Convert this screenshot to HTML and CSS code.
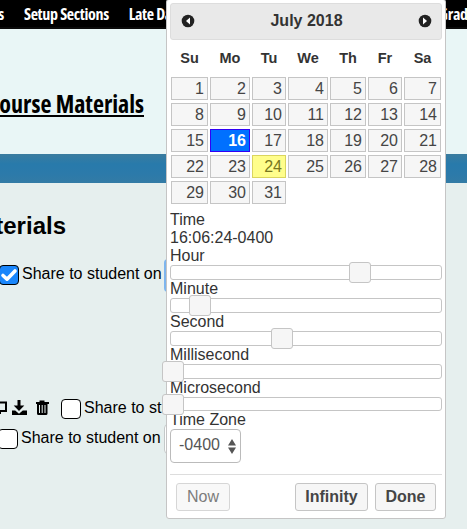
FILE: index.html
```html
<!DOCTYPE html>
<html lang="en">
<head>
<meta charset="utf-8">
<title>Course Materials</title>
<link rel="stylesheet" href="styles.css">
</head>
<body>
<nav class="nav">
  <span class="nav-first"><b class="cond">Materials</b></span>
  <span class="nav-setup"><b class="cond">Setup Sections</b></span>
  <span class="nav-late"><b class="cond">Late Days</b></span>
  <span class="nav-grade"><b class="cond">Grades</b></span>
</nav>
<header class="title"><h1 class="cond">Course Materials</h1></header>
<div class="band"></div>
<main>
  <h2>Materials</h2>
  <div class="row row-a"><i class="check on"><svg viewBox="0 0 18 18"><path d="M3 9.5l4 3.7L15 5" fill="none" stroke="#fff" stroke-width="3.6" stroke-linecap="round" stroke-linejoin="round"/></svg></i><span>Share to student on</span><i class="field focus"></i></div>
  <div class="row row-b">
    <svg class="tools" viewBox="0 0 50 20">
      <path d="M0 3.500H6V12H0M0 12v3" fill="none" stroke="#000" stroke-width="2"/>
      <path d="M17.500 1h3v5.500h3.800L19 12 13.700 6.500h3.800zM12 11.500h3.200l3.800 3.200 3.800-3.200H27V16H12z"/>
      <path d="M39.500 3V1.500h5V3H49v2H36V3zM37 5h10.500v9.500q0 1.500-1.500 1.500h-7.500q-1.500 0-1.500-1.500z"/>
      <path d="M39.500 6v8M42.200 6v8M45 6v8" stroke="#e6efee"/>
    </svg>
    <i class="check"></i><span>Share to student on</span>
  </div>
  <div class="row row-c"><i class="check"></i><span>Share to student on</span><i class="field"></i></div>
</main>

<section class="picker">
  <div class="month">
    <svg viewBox="0 0 14 14"><circle cx="7" cy="7" r="6.300"/><path d="M9 3.500v7L5 7z" fill="#fff"/></svg>
    <b>July 2018</b>
    <svg viewBox="0 0 14 14"><circle cx="7" cy="7" r="6.300"/><path d="M5 3.500v7L9 7z" fill="#fff"/></svg>
  </div>
  <div class="grid days"><b>Su</b><b>Mo</b><b>Tu</b><b>We</b><b>Th</b><b>Fr</b><b>Sa</b></div>
  <div class="grid dates">
    <a>1</a><a>2</a><a>3</a><a>4</a><a>5</a><a>6</a><a>7</a>
    <a>8</a><a>9</a><a>10</a><a>11</a><a>12</a><a>13</a><a>14</a>
    <a>15</a><a class="selected">16</a><a>17</a><a>18</a><a>19</a><a>20</a><a>21</a>
    <a>22</a><a>23</a><a class="today">24</a><a>25</a><a>26</a><a>27</a><a>28</a>
    <a>29</a><a>30</a><a>31</a>
  </div>
  <div class="time">
    <div>Time</div>
    <div>16:06:24-0400</div>
    <div>Hour</div><div class="slider"><i class="handle hour"></i></div>
    <div>Minute</div><div class="slider"><i class="handle minute"></i></div>
    <div>Second</div><div class="slider"><i class="handle second"></i></div>
    <div>Millisecond</div><div class="slider"><i class="handle zero"></i></div>
    <div>Microsecond</div><div class="slider last"><i class="handle zero"></i></div>
    <div>Time Zone</div>
    <div class="select"><span>-0400</span><svg viewBox="0 0 8 15"><path d="M0 6.500L4 0l4 6.500zM0 8.500h8L4 15z" fill="#555"/></svg></div>
  </div>
  <div class="buttons"><span class="btn now">Now</span><span class="btn infinity">Infinity</span><span class="btn done">Done</span></div>
</section>
</body>
</html>
```
FILE: styles.css
```css
* { box-sizing: border-box; }
body { margin: 0; width: 467px; height: 529px; overflow: hidden; position: relative; background: #e6efee; color: #000; font: 16px/18px "Liberation Sans", Arial, sans-serif; }
i { font-style: normal; }
.cond { font-family: "Open Sans", sans-serif; font-weight: 700; font-stretch: 75%; white-space: nowrap; display: inline-block; }
.nav { display: flex; height: 29px; background: #000; border-bottom: 2px solid #0b0b0b; color: #fff; font-size: 16px; line-height: 29px; letter-spacing: -0.35px; }
.nav-first { width: 4px; display: flex; justify-content: flex-end; }
.nav-setup { width: 85px; margin-left: 20px; }
.nav-late { width: 50px; margin-left: 20px; }
.nav-grade { margin-left: 260px; }
.title { height: 125px; padding-top: 57px; background: #e9f6f6; width: 467px; padding-right: 323px; display: flex; justify-content: flex-end; }
.title h1 { margin: 0; height: 31px; font-size: 24px; line-height: 36px; border-bottom: 2px solid #000; }
.band { height: 29px; background: linear-gradient(#3a7c9f, #287aab 35%, #2c7aaa 70%, #337ba5); }
h2 { margin: 28px 0 0; width: 66px; height: 30px; font-size: 24px; line-height: 30px; display: flex; justify-content: flex-end; }
.row { display: flex; align-items: center; height: 20px; white-space: nowrap; }
.row span { line-height: 18px; margin-left: 3px; padding-bottom: 2px; }
.row-a { margin-top: 24px; margin-left: -1px; }
.row-b { margin-top: 114px; }
.row-c { margin-top: 10px; margin-left: -2px; }
.check { flex: none; width: 20px; height: 20px; border: 1px solid #000; border-radius: 4px; background: #fff; }
.check.on { background: #1a86fb; }
.check svg { display: block; width: 18px; height: 18px; }
.tools { width: 50px; height: 20px; margin-right: 11px; flex: none; }
.field { width: 60px; height: 30px; border: 1px solid #c4c9c9; border-radius: 4px; margin-left: 3px; background: #fff; flex: none; }
.field.focus { height: 33px; border: 3px solid #7db5ee; margin-left: 2px; }
.picker { position: absolute; left: 166px; top: -1px; width: 280px; height: 520px; padding: 3px; border: 1px solid #c5c5c5; border-radius: 3px; background: #fff; color: #333; }
.month { display: flex; align-items: center; justify-content: space-between; height: 37px; padding: 0 9px 2px 10px; border: 1px solid #ddd; border-radius: 3px; background: #e9e9e9; }
.month svg { width: 14px; height: 14px; fill: #222; margin-top: 1px; }
.grid { display: grid; grid-template-columns: 37px 40px 34px 40px 36px 34px 37px; column-gap: 2px; margin-left: 1px; }
.days { height: 37px; line-height: 37px; text-align: center; font-size: 14.500px; }
.dates { grid-auto-rows: 23px; row-gap: 3px; font-size: 16px; }
.dates a { border: 1px solid #c5c5c5; background: #f6f6f6; color: #454545; text-align: right; padding-right: 3px; line-height: 21px; }
.dates .selected { background: #0070ff; border-color: #3000f5; color: #fff; font-weight: 700; }
.dates .today { background: #fffe8b; border-color: #dad55e; color: #777620; }
.time { margin-top: 7px; }
.slider { position: relative; height: 15px; border: 1px solid #c5c5c5; border-radius: 3px; }
.slider.last { height: 14px; }
.handle { position: absolute; top: -4px; width: 22px; height: 21px; border: 1px solid #c5c5c5; border-radius: 3px; background: #f6f6f6; }
.hour { left: 178px; }
.minute { left: 18px; }
.second { left: 100px; }
.zero { left: -9px; }
.select { display: flex; align-items: center; justify-content: space-between; width: 71px; height: 34px; padding: 0 4px 2px 8px; border: 1px solid #bbb; border-radius: 4px; color: #555; }
.select svg { width: 8px; height: 15px; margin-top: 2px; }
.buttons { display: flex; height: 42px; margin-top: 11px; border-top: 1px solid #ddd; padding: 8px 6px 0; }
.btn { height: 28px; border: 1px solid #c5c5c5; border-radius: 3px; background: #f6f6f6; color: #454545; font-weight: 700; line-height: 25px; text-align: center; }
.now { width: 54px; margin-right: 65px; font-weight: 400; opacity: .7; }
.infinity { width: 73px; margin-right: 7px; }
.done { width: 61px; }
```
